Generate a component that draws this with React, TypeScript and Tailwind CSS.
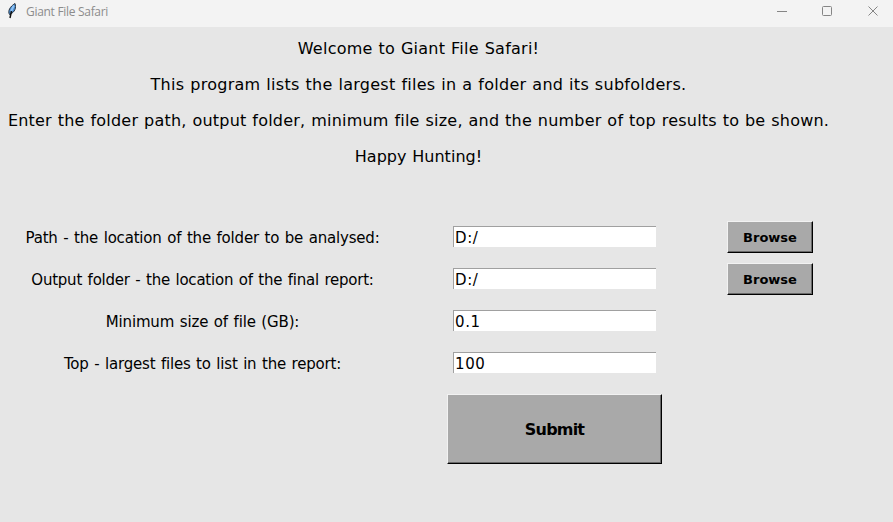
import React from "react";

const intro = [
  { text: "Welcome to Giant File Safari!", tracking: "tracking-[0.25px]" },
  { text: "This program lists the largest files in a folder and its subfolders.", tracking: "tracking-[0.28px]" },
  { text: "Enter the folder path, output folder, minimum file size, and the number of top results to be shown.", tracking: "tracking-[0.22px]" },
  { text: "Happy Hunting!", tracking: "tracking-[0.04px]" },
];

const rows = [
  { label: "Path - the location of the folder to be analysed:", tracking: "tracking-[-0.19px]", value: "D:/", browse: true },
  { label: "Output folder - the location of the final report:", tracking: "tracking-[-0.23px]", value: "D:/", browse: true },
  { label: "Minimum size of file (GB):", tracking: "tracking-[-0.16px]", value: "0.1", browse: false },
  { label: "Top - largest files to list in the report:", tracking: "tracking-[-0.2px]", value: "100", browse: false },
];

const raised =
  "border border-t-[#f2f2f2] border-l-[#f2f2f2] border-r-black border-b-black bg-[#a9a9a9] font-bold shadow-[inset_-1px_-1px_0_#696969]";

function Feather() {
  return (
    <svg width="12" height="18" viewBox="0 0 12 18" className="block">
      <path d="M3.500 12.500C1.500 9 4 4.500 9 1.500c1.200 4 .5 8.500-5.500 11Z" fill="#4d91d6" stroke="#26323f" strokeWidth="1" />
      <path d="M7.800 3.500 5 9.500" stroke="#8fc4f7" strokeWidth="1.800" />
      <path d="M5.500 9 4 16" stroke="#111" strokeWidth="1.500" />
    </svg>
  );
}

export default function App() {
  return (
    <div className="flex h-[522px] w-[893px] flex-col overflow-hidden bg-[#e6e6e6] font-['Verdana','DejaVu_Sans',sans-serif] whitespace-nowrap text-black [font-variant-ligatures:none]">
      <header className="flex h-[27px] shrink-0 items-start bg-[#f3f3f3] pt-[2px] pl-[6px] text-[#8c8c8c]">
        <Feather />
        <span className="mt-px ml-2 font-['Open_Sans',sans-serif] text-[12px] leading-[18px] tracking-[-0.3px]">Giant File Safari</span>
        <svg width="100" height="18" viewBox="0 0 100 18" fill="none" stroke="#858585" className="ml-auto mr-[14px] overflow-visible">
          <path d="M-2 9.500h10" />
          <rect x="43.500" y="4.500" width="9" height="9" rx="1" />
          <path d="m89.500 4.500 9 9m0-9-9 9" />
        </svg>
      </header>
      <section className="flex h-[194px] shrink-0 flex-col items-center pt-[4px] pr-[56px] text-[16px] [word-spacing:0.5px]">
        {intro.map((l) => (
          <p key={l.text} className={`h-9 leading-9 ${l.tracking}`}>{l.text}</p>
        ))}
      </section>
      {rows.map((r) => (
        <div key={r.label} className="flex h-[42px] shrink-0">
          <div className="flex w-[405px] justify-center pt-px text-[15px] leading-8 [word-spacing:1px]">
            <span className={r.tracking}>{r.label}</span>
          </div>
          <div className="mt-[5px] ml-12 h-[21px] w-[203px] border-t border-l border-[#a0a0a0] bg-white pl-px text-[15px] leading-[22px] tracking-[0.6px]">{r.value}</div>
          {r.browse && <button className={`ml-[71px] h-8 w-[86px] pt-px text-[13px] ${raised}`}>Browse</button>}
        </div>
      ))}
      <button className={`mt-[5px] ml-[447px] h-[70px] w-[215px] pt-px text-[16px] tracking-[-0.8px] ${raised}`}>Submit</button>
    </div>
  );
}
